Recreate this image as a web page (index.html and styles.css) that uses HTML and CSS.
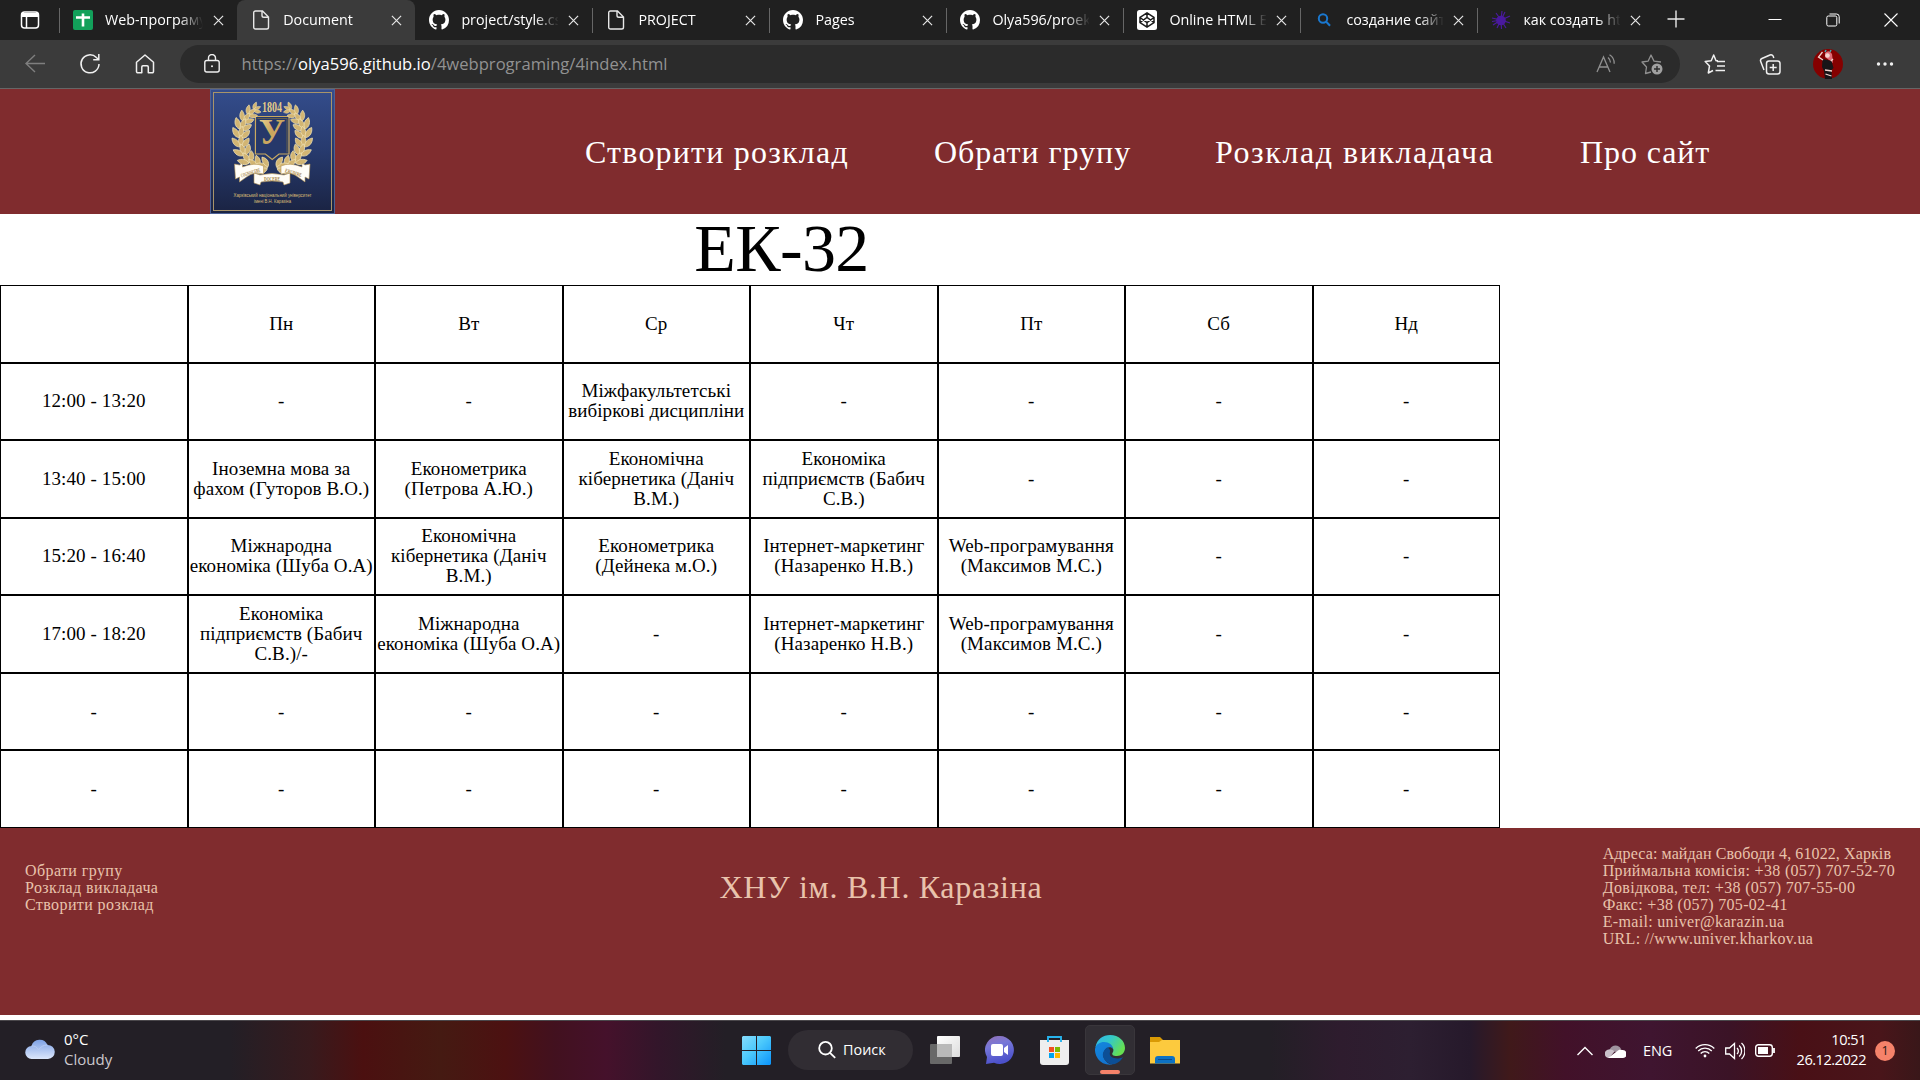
FILE: index.html
```
<!DOCTYPE html>
<html lang="uk">
<head>
<meta charset="utf-8">
<title>Document</title>
<link rel="stylesheet" href="styles.css">
</head>
<body>
<svg class="defs" width="0" height="0" aria-hidden="true">
  <defs>
    <symbol id="close" viewBox="0 0 12 12"><path d="M1 1l10 10M11 1L1 11" fill="none" stroke="#e6e6e6" stroke-width="1.3"/></symbol>
    <symbol id="page" viewBox="0 0 20 20"><path d="M4.5 1h7l6 6v10.200a1.800 1.800 0 0 1-1.800 1.800H4.500a1.800 1.800 0 0 1-1.800-1.800V2.800A1.800 1.800 0 0 1 4.500 1zM11 1v4.500a1.800 1.800 0 0 0 1.800 1.800h4.700" fill="none" stroke="#e8e8e8" stroke-width="1.400"/></symbol>
    <symbol id="github" viewBox="0 0 16 16"><path fill="#fff" d="M8 0C3.580 0 0 3.580 0 8c0 3.540 2.290 6.530 5.470 7.590.4.070.55-.17.55-.38 0-.19-.01-.82-.01-1.490-2.010.37-2.530-.49-2.690-.94-.09-.23-.48-.94-.82-1.130-.28-.15-.68-.52-.01-.53.63-.01 1.080.58 1.230.82.72 1.210 1.870.87 2.330.66.07-.52.28-.87.51-1.070-1.780-.2-3.640-.89-3.640-3.950 0-.87.31-1.590.82-2.150-.08-.2-.36-1.020.08-2.120 0 0 .67-.21 2.200.82.64-.18 1.320-.27 2-.27s1.360.09 2 .27c1.530-1.040 2.200-.82 2.200-.82.44 1.100.16 1.920.08 2.120.51.56.82 1.270.82 2.150 0 3.070-1.870 3.750-3.650 3.950.29.25.54.73.54 1.480 0 1.070-.01 1.930-.01 2.200 0 .21.15.46.55.38A8.010 8.010 0 0 0 16 8c0-4.420-3.580-8-8-8z"/></symbol>
    <linearGradient id="navy" x1="0" y1="0" x2="0" y2="1"><stop offset="0" stop-color="#344d8c"/><stop offset=".5" stop-color="#273a6d"/><stop offset="1" stop-color="#1a2342"/></linearGradient>
    <linearGradient id="gold" x1="0" y1="0" x2="1" y2="1"><stop offset="0" stop-color="#f0dc9c"/><stop offset=".5" stop-color="#c9a45c"/><stop offset="1" stop-color="#e3cb88"/></linearGradient>
    <g id="leaves">
      <path d="M0 5C-3.500 2-3.500-2 0-7 3.500-2 3.500 2 0 5z"/>
      <path d="M-1 5C-6 5-9 1-9-4-4-3-1 0-1 5z"/>
      <path d="M1 5C6 5 9 1 8-4 4-3 1 0 1 5z"/>
    </g>
    <g id="branch" fill="#d2b573" stroke="#f0e2b4" stroke-width=".7">
      <use href="#leaves" transform="translate(46.500 19.500) rotate(65) scale(.65)"/>
      <use href="#leaves" transform="translate(41 23.500) rotate(52) scale(.8)"/>
      <use href="#leaves" transform="translate(36 29) rotate(38) scale(.9)"/>
      <use href="#leaves" transform="translate(32.500 36) rotate(25)"/>
      <use href="#leaves" transform="translate(31 44) rotate(10)"/>
      <use href="#leaves" transform="translate(31 53)"/>
      <use href="#leaves" transform="translate(33 61.500) rotate(-20)"/>
      <use href="#leaves" transform="translate(37 69.500) rotate(-35)"/>
      <use href="#leaves" transform="translate(44 75) rotate(-50)"/>
      <use href="#leaves" transform="translate(53 77) rotate(-70)"/>
    </g>
  </defs>
</svg>

<header class="tabs">
  <div class="tab-actions"><svg width="20" height="20" viewBox="0 0 20 20" fill="none" stroke="#fff" stroke-width="1.500"><rect x="1.500" y="2" width="17" height="16" rx="3"/><path d="M2 5h16" stroke-width="4"/><path d="M6.500 5v13"/></svg></div>
  <div class="tab"><svg class="fav" viewBox="0 0 20 20"><rect width="20" height="20" rx="2" fill="#12a05a"/><path d="M10 3.500v13M3 7.500h14" stroke="#fff" stroke-width="2.600"/></svg><span class="name">Web-програмування</span><svg class="x"><use href="#close"/></svg></div>
  <div class="tab active"><svg class="fav"><use href="#page"/></svg><span class="name">Document</span><svg class="x"><use href="#close"/></svg></div>
  <div class="tab"><svg class="fav"><use href="#github"/></svg><span class="name">project/style.css</span><svg class="x"><use href="#close"/></svg></div>
  <div class="tab"><svg class="fav"><use href="#page"/></svg><span class="name">PROJECT</span><svg class="x"><use href="#close"/></svg></div>
  <div class="tab"><svg class="fav"><use href="#github"/></svg><span class="name">Pages</span><svg class="x"><use href="#close"/></svg></div>
  <div class="tab"><svg class="fav"><use href="#github"/></svg><span class="name">Olya596/proekt</span><svg class="x"><use href="#close"/></svg></div>
  <div class="tab"><svg class="fav" viewBox="0 0 20 20"><rect width="20" height="20" rx="2.500" fill="#fff"/><path d="M10 2.800l7 4.700v5l-7 4.700-7-4.700v-5zM10 2.800v4.700M10 12.500v4.700M3 7.500l7 5 7-5M3 12.500l7-5 7 5" fill="none" stroke="#1b1b1b" stroke-width="1.500"/></svg><span class="name">Online HTML Editor</span><svg class="x"><use href="#close"/></svg></div>
  <div class="tab"><svg class="fav" viewBox="0 0 20 20" fill="none" stroke="#1a78cf" stroke-width="2"><circle cx="9" cy="8.500" r="4.200"/><path d="M12 11.500l4 4.200"/></svg><span class="name">создание сайта</span><svg class="x"><use href="#close"/></svg></div>
  <div class="tab"><svg class="fav" viewBox="0 0 20 20"><circle cx="10" cy="10.500" r="4.800" fill="#4a1a9e"/><path d="M11 1l-1 9 4-8M1 8l9 2 9-4M2 15l8-5 9 3M5 3l5 7 5 8M10 10L6 18M10 10l.5 9M1 11.500l9-1.500" fill="none" stroke="#4a1a9e" stroke-width="1.200"/></svg><span class="name">как создать html</span><svg class="x"><use href="#close"/></svg></div>
  <svg class="new-tab" viewBox="0 0 18 18"><path d="M9 .5v17M.5 9h17" stroke="#e8e8e8" stroke-width="1.400"/></svg>
  <div class="window-buttons">
    <svg width="14" height="14" viewBox="0 0 14 14"><path d="M.5 6.500h13" stroke="#fff"/></svg>
    <svg width="14" height="14" viewBox="0 0 14 14" fill="none" stroke="#fff"><rect x=".8" y="3" width="10" height="10" rx="1.500"/><path d="M3.500 1h7a2.700 2.700 0 0 1 2.700 2.700V10.500"/></svg>
    <svg width="14" height="14" viewBox="0 0 14 14"><path d="M.5.5l13 13M13.500.5l-13 13" stroke="#fff" stroke-width="1.100"/></svg>
  </div>
</header>

<div class="toolbar">
  <div class="nav-buttons">
    <svg width="20" height="20" viewBox="0 0 20 20" fill="none" stroke="#7f7f7f" stroke-width="1.400"><path d="M20 9.500H1M10 1L1 9.500l9 8.500"/></svg>
    <svg width="22" height="22" viewBox="0 0 22 22" fill="none" stroke="#f0f0f0" stroke-width="1.500"><path d="M20 11a9 9 0 1 1-2.600-6.500L19.500 6.500M19.800 1v5.800h-5.600"/></svg>
    <svg width="20" height="20" viewBox="0 0 20 20" fill="none" stroke="#f0f0f0" stroke-width="1.500" stroke-linejoin="round"><path d="M1.500 8.200L10 1l8.500 7.200v9.300a1.200 1.200 0 0 1-1.200 1.200h-4V13a1.200 1.200 0 0 0-1.200-1.200H8A1.200 1.200 0 0 0 6.800 13v5.700h-4a1.200 1.200 0 0 1-1.300-1.200z"/></svg>
  </div>
  <div class="address">
    <svg width="18" height="20" viewBox="0 0 18 20" fill="none" stroke="#f0f0f0" stroke-width="1.400"><rect x="1.800" y="6.500" width="14.400" height="11.500" rx="2"/><path d="M5.500 6.500V4a3.500 3.500 0 0 1 7 0V6.500"/><circle cx="9" cy="12.200" r="1" fill="#f0f0f0" stroke="none"/></svg>
    <span class="url">https://<b>olya596.github.io</b>/4webprograming/4index.html</span>
    <svg class="read" width="20" height="20" viewBox="0 0 20 20" fill="none" stroke="#909090" stroke-width="1.300"><path d="M1 18L7.500 3 14 18M3.200 13h8.600M12 3.500a7 7 0 0 1 2.500 5M13.500.8a10 10 0 0 1 4.700 9"/></svg>
    <svg width="22" height="22" viewBox="0 0 22 22" fill="none"><path d="M10 19l-5.500 1.500L5.500 14 1 9l6.200-.9L10 2l3 6.100 7 .9" stroke="#909090" stroke-width="1.300" stroke-linejoin="round"/><circle cx="16" cy="16" r="5.500" fill="#a0a0a0"/><path d="M16 13v6M13 16h6" stroke="#2b2b2b" stroke-width="1.400"/></svg>
  </div>
  <div class="tools">
    <svg width="22" height="22" viewBox="0 0 22 22" fill="none" stroke="#f0f0f0" stroke-width="1.500" stroke-linejoin="round"><path d="M14 7.700h-2L9.700 2 7.200 7.700l-6 .9L5.500 13l-1.200 7L9 17.500M13 8.500h8M13 13h8M11.500 17.500H21"/></svg>
    <svg width="22" height="22" viewBox="0 0 22 22" fill="none" stroke="#f0f0f0" stroke-width="1.500"><rect x="7.500" y="8" width="13.500" height="13" rx="2.500"/><path d="M14.200 11v7M10.700 14.500h7M5 17l-3.300-8.500a2.400 2.400 0 0 1 1.200-3L11 2a2.400 2.400 0 0 1 3.200 1.300L14.800 5"/></svg>
    <svg width="30" height="30" viewBox="0 0 30 30"><circle cx="15" cy="15" r="15" fill="#850000"/><path d="M12 4q4-4 7 1l1 9-4-3-4-3z" fill="#df6b76"/><circle cx="14.500" cy="6.500" r="2.300" fill="#f3d4cf"/><path d="M12 3l1-2M17 3l1-2" stroke="#45a8b1" stroke-width="1.500"/><path d="M9.500 10l5 1 4 1 2 7-2 2 .5 9h-7l-1-8-2-4z" fill="#171518"/><path d="M10 11L5.500 8l4-5M18 12l2-2M12 21l7 1M12.500 25l6 2" fill="none" stroke="#f3d4cf" stroke-width="1.300"/></svg>
    <svg width="18" height="6" viewBox="0 0 18 6" fill="#f0f0f0"><circle cx="2.500" cy="3" r="1.700"/><circle cx="9" cy="3" r="1.700"/><circle cx="15.500" cy="3" r="1.700"/></svg>
  </div>
</div>

<main class="site">
  <div class="site-header">
    <svg class="logo" viewBox="0 0 125 125">
      <rect x=".5" y=".5" width="124" height="124" fill="url(#navy)" stroke="#4d6196"/>
      <rect x="3.500" y="3.500" width="118" height="118" fill="none" stroke="#a8946a"/>
      <path d="M45.500 27.500h33.500v37.500H69l-6.800 5.500-6.800-5.500h-10z" fill="#26386a" stroke="#c9a960" stroke-width="1.200"/>
      <path d="M47.500 29.500h29.500v34" fill="none" stroke="#80713f" stroke-width=".7"/>
      <use href="#branch"/><use href="#branch" transform="translate(124.500 0) scale(-1 1)"/>
      <text x="62" y="22.500" font-size="15" font-weight="bold" textLength="20" lengthAdjust="spacingAndGlyphs" text-anchor="middle" fill="#e3cb88">1804</text>
      <text x="62" y="55" font-size="36" font-weight="bold" text-anchor="middle" fill="url(#gold)">У</text>
      <g fill="#fffdf7" stroke="#b69656" stroke-width=".6">
        <path d="M24.500 75l5 1 3-2v4q12-5 21-1v8q-9-3-17 3l-7 5v-5l-4 2zM100 75l-5 1-3-2v4q-12-5-21-1v8q9-3 17 3l7 5v-5l4 2z"/>
        <path d="M44 84l6 2q12-3 24 0l6-2v10l-6 2-1-3q-11-2-22 0l-1 3-6-2z"/>
      </g>
      <g class="ribbon-text" font-size="5.500" font-weight="bold" text-anchor="middle" fill="#a37e3a"><text textLength="20" lengthAdjust="spacingAndGlyphs" transform="translate(41 85.500) rotate(-17)">COGNOSCERE</text><text x="62" y="91.500" textLength="16" lengthAdjust="spacingAndGlyphs">DOCERE</text><text textLength="17" lengthAdjust="spacingAndGlyphs" transform="translate(83 85.500) rotate(17)">ERUDIRE</text></g>
      <g class="logo-caption" font-size="6" text-anchor="middle" fill="#d9bd75"><text x="62.500" y="107.500" textLength="78" lengthAdjust="spacingAndGlyphs">Харківський національний університет</text><text x="62.500" y="114" textLength="37" lengthAdjust="spacingAndGlyphs">імені В.Н. Каразіна</text></g>
    </svg>
    <nav class="menu"><a>Створити розклад</a><a>Обрати групу</a><a>Розклад викладача</a><a>Про сайт</a></nav>
  </div>

  <h1>ЕК-32</h1>

  <div class="timetable">
    <div></div><div>Пн</div><div>Вт</div><div>Ср</div><div>Чт</div><div>Пт</div><div>Сб</div><div>Нд</div>
    <div>12:00 - 13:20</div><div>-</div><div>-</div><div>Міжфакультетські<br>вибіркові дисципліни</div><div>-</div><div>-</div><div>-</div><div>-</div>
    <div>13:40 - 15:00</div><div>Іноземна мова за<br>фахом (Гуторов В.О.)</div><div>Економетрика<br>(Петрова А.Ю.)</div><div>Економічна<br>кібернетика (Даніч<br>В.М.)</div><div>Економіка<br>підприємств (Бабич<br>С.В.)</div><div>-</div><div>-</div><div>-</div>
    <div>15:20 - 16:40</div><div>Міжнародна<br>економіка (Шуба О.А)</div><div>Економічна<br>кібернетика (Даніч<br>В.М.)</div><div>Економетрика<br>(Дейнека м.О.)</div><div>Інтернет-маркетинг<br>(Назаренко Н.В.)</div><div>Web-програмування<br>(Максимов М.С.)</div><div>-</div><div>-</div>
    <div>17:00 - 18:20</div><div>Економіка<br>підприємств (Бабич<br>С.В.)/-</div><div>Міжнародна<br>економіка (Шуба О.А)</div><div>-</div><div>Інтернет-маркетинг<br>(Назаренко Н.В.)</div><div>Web-програмування<br>(Максимов М.С.)</div><div>-</div><div>-</div>
    <div>-</div><div>-</div><div>-</div><div>-</div><div>-</div><div>-</div><div>-</div><div>-</div>
    <div>-</div><div>-</div><div>-</div><div>-</div><div>-</div><div>-</div><div>-</div><div>-</div>
  </div>

  <footer class="site-footer">
    <div class="links">Обрати групу<br>Розклад викладача<br>Створити розклад</div>
    <div class="owner">ХНУ ім. В.Н. Каразіна</div>
    <div class="contacts"><span class="street">Адреса: майдан Свободи 4, 61022, Харків</span><br>Приймальна комісія: +38 (057) 707-52-70<br>Довідкова, тел: +38 (057) 707-55-00<br>Факс: +38 (057) 705-02-41<br>E-mail: univer@karazin.ua<br>URL: //www.univer.kharkov.ua</div>
  </footer>
</main>

<div class="taskbar">
  <div class="weather">
    <svg width="30" height="20" viewBox="0 0 30 20"><defs><linearGradient id="cl" x1="0" y1="0" x2="0" y2="1"><stop offset="0" stop-color="#7ea2e6"/><stop offset="1" stop-color="#dbe6fb"/></linearGradient></defs><path d="M7 20a6.500 6.500 0 0 1-.5-13A8.500 8.500 0 0 1 22.500 6 7 7 0 0 1 23 20z" fill="url(#cl)"/><path d="M6.500 7q5-.5 7 4 3-5 9-5" fill="none" stroke="#b6cbf4"/></svg>
    <div><div class="deg">0°C</div><div class="sky">Cloudy</div></div>
  </div>
  <div class="apps">
    <svg class="start" width="29" height="29" viewBox="0 0 29 29"><defs><linearGradient id="w" x1="0" y1="0" x2="1" y2="1"><stop offset="0" stop-color="#86dcfc"/><stop offset=".45" stop-color="#4cc9fb"/><stop offset="1" stop-color="#0b93fb"/></linearGradient></defs><path d="M1 0h13v14H0V1zM15 0h13l1 1v13H15zM0 15h14v14H1l-1-1zM15 15h14v13l-1 1H15z" fill="url(#w)"/></svg>
    <div class="search"><svg width="18" height="18" viewBox="0 0 18 18" fill="none" stroke="#fff" stroke-width="1.800"><circle cx="7.500" cy="7.200" r="6.300"/><path d="M12 11.800l5.200 5"/></svg><span>Поиск</span></div>
    <svg class="views" width="30" height="28" viewBox="0 0 30 28"><defs><linearGradient id="tv" x1="0" y1="0" x2="1" y2="1"><stop offset="0" stop-color="#fff"/><stop offset="1" stop-color="#dcdcdc"/></linearGradient></defs><rect y="8" width="22" height="20" rx="1" fill="#686868"/><rect x="7" width="23" height="21" rx="1" fill="url(#tv)"/><path d="M7 8h15v13H7z" fill="#b9b9b9"/></svg>
    <svg class="chat" width="29" height="28" viewBox="0 0 29 28"><defs><linearGradient id="ch" x1="0" y1="0" x2=".3" y2="1"><stop offset="0" stop-color="#9470b5"/><stop offset=".4" stop-color="#7878d8"/><stop offset="1" stop-color="#4c51cb"/></linearGradient></defs><path d="M15 0a14 14 0 1 1-6 26.700L1 28l1-7A14 14 0 0 1 15 0z" fill="url(#ch)"/><rect x="6" y="8" width="12" height="12" rx="2" fill="#fff"/><path d="M19 12l4-3v10l-4-3z" fill="#fff"/></svg>
    <svg class="store" width="29" height="29" viewBox="0 0 29 29"><path d="M0 4h29v22a3 3 0 0 1-3 3H3a3 3 0 0 1-3-3z" fill="#eee"/><path d="M8 6V1h13v5" fill="none" stroke="#27b3ed" stroke-width="1.900"/><path d="M9 11h5v5H9z" fill="#f25022"/><path d="M15 11h5v5h-5z" fill="#7fba00"/><path d="M9 17h5v5H9z" fill="#00a4ef"/><path d="M15 17h5v5h-5z" fill="#ffb900"/></svg>
    <div class="running"><svg width="30" height="30" viewBox="0 0 30 30"><defs><linearGradient id="e1" x1="0" y1="0" x2="1" y2=".5"><stop offset="0" stop-color="#2fb5ec"/><stop offset=".5" stop-color="#35c9c5"/><stop offset="1" stop-color="#66e052"/></linearGradient><linearGradient id="e2" x1="0" y1="0" x2=".5" y2="1"><stop offset="0" stop-color="#1388df"/><stop offset="1" stop-color="#1374cf"/></linearGradient></defs><path d="M.5 12C2 4 8 0 15 0c9 0 15 6 15 13 0 5-4 8-8 8-4 0-6-1.500-4-4 1.500-3-1-6-5-7z" fill="url(#e1)"/><path d="M0 14C1 9 5 7 9 7c5 0 9 3 9 7-1-2-4-2.500-6-1-4 3-5 8-2 12 3 4 6 4.500 8 4.500A15 15 0 0 1 0 14z" fill="url(#e2)"/><path d="M12 12.500c-4 3-6 8-2 12.500 3 4 8 5.500 12 3 3-1.500 5-4 6-6-5 3-15 1.500-13-5 .5-2-1-4.500-3-4.500z" fill="#0c4f96"/></svg></div>
    <svg class="files" width="30" height="27" viewBox="0 0 30 27"><path d="M0 0h10l3 3v5H0z" fill="#d99a05"/><path d="M0 5h9l3-2h18v23.500H0z" fill="#fcca3e"/><path d="M5 26.500V22a3 3 0 0 1 3-3h14a3 3 0 0 1 3 3v4.500z" fill="#0d72c4"/><path d="M8 22.500h14" stroke="#0a4b8c"/></svg>
  </div>
  <div class="tray">
    <svg class="chev" width="16" height="10" viewBox="0 0 16 10"><path d="M.5 9L8 1.500 15.500 9" fill="none" stroke="#fff" stroke-width="1.400"/></svg>
    <svg class="drive" width="21" height="14" viewBox="0 0 21 14"><path d="M5 5a6 6 0 0 1 11 0l-4 3-9-1z" fill="#9f939f"/><path d="M3.500 14a4.200 4.200 0 0 1 1-8.500q3-.5 5 2l-5 6z" fill="#c9c0c9"/><path d="M3 14L13 6.500q2-1.500 4-.5a4 4 0 0 1 1 8z" fill="#fff"/></svg>
    <span class="lang">ENG</span>
    <svg class="wifi" width="20" height="15" viewBox="0 0 20 15" fill="none" stroke="#fff" stroke-width="1.300"><path d="M.7 5.500a13 13 0 0 1 18.600 0M3.200 8a9.500 9.500 0 0 1 13.600 0M5.700 10.500a6 6 0 0 1 8.600 0"/><circle cx="10" cy="13" r="1.400" fill="#fff" stroke="none"/></svg>
    <svg class="sound" width="20" height="18" viewBox="0 0 20 18" fill="none" stroke="#fff" stroke-width="1.300"><path d="M.7 6H4.500L9.500 1.500v15L4.500 12H.7zM12 6a4 4 0 0 1 0 6M14.200 3.500a7.500 7.500 0 0 1 0 11M16.500 1a11 11 0 0 1 0 16"/></svg>
    <svg class="battery" width="20" height="13" viewBox="0 0 20 13"><rect x=".7" y=".7" width="16.600" height="11.600" rx="2.700" fill="none" stroke="#fff" stroke-width="1.400"/><rect x="3" y="3" width="10" height="7" fill="#fff"/><path d="M19 4v5" stroke="#fff" stroke-width="1.800"/></svg>
    <div class="clock">10:51<br>26.12.2022</div>
    <div class="badge">1</div>
  </div>
</div>
</body>
</html>
```
FILE: styles.css
```
* { box-sizing: border-box; }
body {
  margin: 0;
  width: 1920px;
  height: 1080px;
  overflow: hidden;
  background: #fff;
  font-family: "Liberation Serif", serif;
  color: #000;
}
svg { display: block; flex: none; }
.defs { position: absolute; }

/* tab strip */
.tabs {
  display: flex;
  height: 40px;
  background: #202020;
  font: 14.300px "Open Sans", sans-serif;
  color: #fff;
}
.tab-actions {
  width: 60px;
  height: 30px;
  margin-top: 8px;
  margin-right: -1px;
  padding: 2px 0 0 20px;
}
.tab {
  position: relative;
  display: flex;
  align-items: center;
  width: 177px;
  padding: 0 13px 0 14px;
}
.tab:nth-child(2), .tab:nth-child(3) { width: 178.200px; }
.tab::before {
  content: "";
  position: absolute;
  left: 0;
  top: 8px;
  width: 1px;
  height: 25px;
  background: #666;
}
.tab.active { background: #3b3b3b; border-radius: 8px 8px 0 0; }
.tab.active::before, .tab.active + .tab::before { display: none; }
.fav { width: 20px; height: 20px; margin-right: 12px; }
.name {
  flex: 1;
  overflow: hidden;
  white-space: nowrap;
  line-height: 22px;
  margin-right: 10px;
  -webkit-mask-image: linear-gradient(90deg, #000 74px, transparent 98px);
  mask-image: linear-gradient(90deg, #000 74px, transparent 98px);
}
.x { width: 11px; height: 11px; }
.new-tab { width: 18px; height: 18px; margin: 10px 0 0 13px; }
.window-buttons {
  display: flex;
  gap: 44px;
  margin-left: auto;
  padding: 13px 22px 0 0;
}

/* toolbar */
.toolbar {
  display: flex;
  align-items: center;
  height: 49px;
  background: #3b3b3b;
  border-bottom: 1px solid #666;
}
.nav-buttons {
  display: flex;
  align-items: center;
  gap: 34px;
  width: 180px;
  padding-left: 25px;
}
.address {
  display: flex;
  align-items: center;
  width: 1500px;
  height: 38px;
  padding: 0 17px 0 23px;
  border-radius: 19px;
  background: #2b2b2b;
}
.url {
  flex: 1;
  margin-left: 20.500px;
  font: 16.600px/24px "Open Sans", sans-serif;
  color: #929292;
}
.url b { font-weight: 400; color: #fff; }
.read { margin-right: 25px; }
.tools {
  display: flex;
  align-items: center;
  justify-content: space-between;
  width: 214px;
  padding-left: 24px;
}

/* page */
.site-header {
  display: flex;
  align-items: center;
  height: 125px;
  padding-left: 210px;
  background: #802c2e;
}
.logo { width: 125px; height: 125px; font-family: "Liberation Serif", serif; }
.logo-caption { font-family: "Liberation Sans", sans-serif; }
.menu {
  display: flex;
  margin-left: 250px;
  font-size: 32px;
  line-height: 36px;
  color: #fff;
  white-space: nowrap;
}
.menu a:nth-child(1) { width: 349px; letter-spacing: 1.200px; }
.menu a:nth-child(2) { width: 281px; letter-spacing: .95px; }
.menu a:nth-child(3) { width: 365px; letter-spacing: 1.550px; }
.menu a:nth-child(4) { letter-spacing: .9px; }
h1 {
  width: 1563px;
  height: 71px;
  margin: 0;
  font-size: 68px;
  font-weight: 400;
  line-height: 69px;
  letter-spacing: -.6px;
  text-align: center;
}
.timetable {
  display: grid;
  grid-template-columns: repeat(8, 187.500px);
  grid-template-rows: repeat(7, 77.570px);
  width: 1500px;
  height: 543px;
  font-size: 19px;
  line-height: 20px;
  letter-spacing: .1px;
  text-align: center;
  white-space: nowrap;
}
.timetable > div {
  display: flex;
  align-items: center;
  justify-content: center;
  border: 1px solid #000;
}
.site-footer {
  display: flex;
  height: 187px;
  padding: 0 25px;
  background: #802c2e;
  color: #e9c3ac;
  font-size: 16px;
  line-height: 17px;
}
.links { width: 695px; padding-top: 34px; letter-spacing: .4px; }
.owner {
  width: 884px;
  padding-top: 42px;
  font-size: 32px;
  line-height: 35px;
  letter-spacing: .68px;
}
.contacts { padding-top: 17px; white-space: nowrap; letter-spacing: .32px; }
.street { letter-spacing: .1px; }

/* taskbar */
.taskbar {
  display: flex;
  height: 60px;
  margin-top: 5px;
  border-top: 1px solid #4a474b;
  background: linear-gradient(90deg, #231f26 0, #231f26 230px, #381a1d 310px, #4b1010 363px, #451a12 440px, #4c1111 505px, #42111f 555px, #45112b 606px, #32162a 660px, #231f26 725px, #231f26 1270px, #2e1c2e 1340px, #2d1f31 1410px, #26192b 1470px, #40191a 1510px, #421129 1565px, #3f1530 1650px, #3b1326 1730px, #491016 1800px, #49151a 1880px, #391719 1920px);
  color: #fff;
  font: 15px/20px "Open Sans", sans-serif;
}
.weather { display: flex; width: 742px; padding: 8px 0 0 25px; gap: 9px; }
.weather svg { margin-top: 10px; }
.sky { color: #ccc8cd; }
.apps { display: flex; }
.start { margin-top: 15px; }
.search {
  display: flex;
  align-items: center;
  gap: 7px;
  width: 125px;
  height: 40px;
  margin: 9px 0 0 17px;
  padding-left: 30px;
  border-radius: 20px;
  background: #312d33;
  font-size: 14.400px;
}
.views { margin: 15px 0 0 17px; }
.chat { margin: 15px 0 0 25px; }
.store { margin: 15px 0 0 26px; }
.running {
  position: relative;
  width: 50px;
  height: 50px;
  margin: 4px 0 0 16px;
  padding: 9px;
  border: 1px solid #39363b;
  border-radius: 5px;
  background: #312e34;
}
.running::after {
  content: "";
  position: absolute;
  left: 14px;
  bottom: 0;
  width: 20px;
  height: 4px;
  border-radius: 2px;
  background: #f5826a;
}
.files { margin: 16px 0 0 15px; }
.tray { display: flex; align-items: center; margin-left: auto; padding-right: 25px; }
.drive { margin-left: 12px; }
.lang { width: 31px; margin-left: 17px; font-size: 14.500px; letter-spacing: -.1px; }
.wifi { margin-left: 21px; }
.sound { margin-left: 10px; }
.battery { margin-left: 10px; }
.clock {
  width: 91px;
  padding-bottom: 3px;
  font-size: 14.600px;
  letter-spacing: -.5px;
  text-align: right;
}
.badge {
  width: 20px;
  height: 20px;
  margin-left: 9px;
  border-radius: 50%;
  background: #f5826a;
  color: #2b1512;
  font-size: 12.500px;
  text-align: center;
}
```
